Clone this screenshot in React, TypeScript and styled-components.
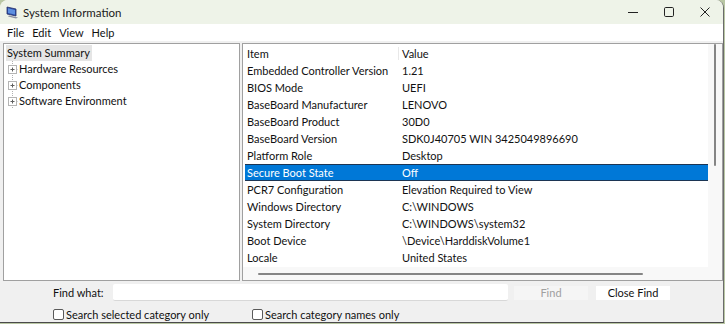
import * as React from "react"
import { styled, createGlobalStyle } from "styled-components"

const GlobalStyle = createGlobalStyle`
  html, body {
    margin: 0;
    padding: 0;
    background: #b9c7a4;
  }
  body {
    font-family: Lato, "Noto Sans", sans-serif;
    font-size: 11px;
    color: #111;
  }
`

const items: [string, string][] = [
  ["Embedded Controller Version", "1.21"],
  ["BIOS Mode", "UEFI"],
  ["BaseBoard Manufacturer", "LENOVO"],
  ["BaseBoard Product", "30D0"],
  ["BaseBoard Version", "SDK0J40705 WIN 3425049896690"],
  ["Platform Role", "Desktop"],
  ["Secure Boot State", "Off"],
  ["PCR7 Configuration", "Elevation Required to View"],
  ["Windows Directory", "C:\\WINDOWS"],
  ["System Directory", "C:\\WINDOWS\\system32"],
  ["Boot Device", "\\Device\\HarddiskVolume1"],
  ["Locale", "United States"],
]

const treeItems = ["Hardware Resources", "Components", "Software Environment"]

const AppIcon = () => (
  <svg width="13" height="13" viewBox="0 0 13 13">
    <path d="M1 1 L10 3 L10 10 L1 8 Z" fill="#2b4fa8" stroke="#27306b" strokeWidth="0.8" />
    <path d="M2 2.3 L9 4 L9 8.6 L2 7 Z" fill="#5d8fe0" />
    <path d="M3 9.5 L12 11.5 L10 12.5 L2 10.5 Z" fill="#8a8fa0" />
  </svg>
)

const Expander = () => (
  <svg width="11" height="16" viewBox="0 0 11 16">
    <line x1="5.5" y1="0" x2="5.5" y2="16" stroke="#b0b0b0" strokeDasharray="1 1" />
    <line x1="5.5" y1="8.5" x2="11" y2="8.5" stroke="#b0b0b0" strokeDasharray="1 1" />
    <rect x="1.5" y="4.5" width="8" height="8" fill="#fff" stroke="#b4b4b4" />
    <line x1="3.5" y1="8.5" x2="7.5" y2="8.5" stroke="#606060" />
    <line x1="5.5" y1="6.5" x2="5.5" y2="10.5" stroke="#606060" />
  </svg>
)

export default function App() {
  return (
    <>
      <GlobalStyle />
      <Window>
        <TitleBar>
          <TitleLeft>
            <AppIcon />
            <TitleText>System Information</TitleText>
          </TitleLeft>
          <Controls>
            <CtrlButton aria-label="Minimize">
              <svg width="12" height="12" viewBox="0 0 12 12">
                <line x1="1" y1="6.5" x2="11" y2="6.5" stroke="#222" />
              </svg>
            </CtrlButton>
            <CtrlButton aria-label="Maximize">
              <svg width="12" height="12" viewBox="0 0 12 12">
                <rect x="1.5" y="1.5" width="9" height="9" rx="1.2" fill="none" stroke="#222" />
              </svg>
            </CtrlButton>
            <CtrlButton aria-label="Close">
              <svg width="12" height="12" viewBox="0 0 12 12">
                <path d="M1.5 1.5 L10.5 10.5 M10.5 1.5 L1.5 10.5" stroke="#222" />
              </svg>
            </CtrlButton>
          </Controls>
        </TitleBar>

        <MenuBar>
          <MenuItem>File</MenuItem>
          <MenuItem>Edit</MenuItem>
          <MenuItem>View</MenuItem>
          <MenuItem>Help</MenuItem>
        </MenuBar>

        <Body>
          <Panes>
            <TreePane>
              <TreeRoot>System Summary</TreeRoot>
              {treeItems.map((t) => (
                <TreeRow key={t}>
                  <Expander />
                  <span>{t}</span>
                </TreeRow>
              ))}
            </TreePane>

            <ListPane>
              <ListArea>
                <ListRows>
                  <HeaderRow>
                    <ItemCell>Item</ItemCell>
                    <ValueCell $header>Value</ValueCell>
                  </HeaderRow>
                  {items.map(([k, v]) => (
                    <DataRow key={k} $selected={k === "Secure Boot State"}>
                      <ItemCell>{k}</ItemCell>
                      <ValueCell>{v}</ValueCell>
                    </DataRow>
                  ))}
                </ListRows>
                <VScroll>
                  <VThumb />
                </VScroll>
              </ListArea>
              <HScroll>
                <HThumb />
              </HScroll>
            </ListPane>
          </Panes>

          <FindRow>
            <FindLabel>Find what:</FindLabel>
            <FindInput />
            <PushButton disabled>Find</PushButton>
            <PushButton>Close Find</PushButton>
          </FindRow>

          <CheckRow>
            <CheckLabel $width={199}>
              <CheckBox />
              Search selected category only
            </CheckLabel>
            <CheckLabel>
              <CheckBox />
              Search category names only
            </CheckLabel>
          </CheckRow>
        </Body>
      </Window>
    </>
  )
}

const Window = styled.div`
  width: 723px;
  height: 322px;
  display: flex;
  flex-direction: column;
  background: #f0f0f0;
  border-right: 1px solid #6b6b6b;
  border-bottom: 1px solid #4a4a4a;
  border-radius: 8px 8px 0 0;
  overflow: hidden;
`

const TitleBar = styled.div`
  height: 24px;
  flex: none;
  display: flex;
  align-items: center;
  justify-content: space-between;
  background: #eef3e8;
`

const TitleLeft = styled.div`
  display: flex;
  align-items: center;
  gap: 4px;
  padding-left: 6px;
`

const TitleText = styled.span`
  font-size: 11.5px;
  color: #1a1a1a;
`

const Controls = styled.div`
  display: flex;
  height: 100%;
`

const CtrlButton = styled.div`
  width: 36px;
  height: 100%;
  display: flex;
  align-items: center;
  justify-content: center;
`

const MenuBar = styled.div`
  height: 16px;
  flex: none;
  display: flex;
  align-items: center;
  gap: 8px;
  background: #fff;
  padding: 0 0 1px 7px;
`

const MenuItem = styled.span`
  font-size: 11px;
`

const Body = styled.div`
  flex: 1;
  display: flex;
  flex-direction: column;
  background: #f0f0f0;
`

const Panes = styled.div`
  display: flex;
  gap: 2px;
  padding: 2px 0 0 3px;
  height: 238px;
`

const Pane = styled.div`
  background: #fff;
  border: 1px solid #a0a0a0;
  box-sizing: border-box;
  height: 100%;
`

const TreePane = styled(Pane)`
  width: 237px;
  padding: 1px 2px;
`

const TreeRoot = styled.div`
  display: inline-block;
  height: 16px;
  line-height: 16px;
  padding: 0 2px 0 1px;
  background: #e5e5e5;
`

const TreeRow = styled.div`
  height: 16px;
  display: flex;
  align-items: center;
  gap: 1px;
  line-height: 16px;
  padding-left: 1px;
`

const ListPane = styled(Pane)`
  flex: 1;
  display: flex;
  flex-direction: column;
`

const ListArea = styled.div`
  flex: 1;
  display: flex;
  min-height: 0;
`

const ListRows = styled.div`
  flex: 1;
  padding: 1px 0 0 2px;
`

const HeaderRow = styled.div`
  height: 17px;
  display: flex;
  align-items: center;
`

const DataRow = styled.div<{ $selected?: boolean }>`
  height: 17px;
  display: flex;
  align-items: center;
  box-sizing: border-box;
  background: ${(p) => (p.$selected ? "#0078d7" : "transparent")};
  color: ${(p) => (p.$selected ? "#fff" : "#111")};
  border-top: 1px solid ${(p) => (p.$selected ? "#1c3553" : "transparent")};
  border-bottom: 1px solid ${(p) => (p.$selected ? "#1c3553" : "transparent")};
`

const ItemCell = styled.span`
  width: 151px;
  padding-left: 2px;
  white-space: nowrap;
  overflow: hidden;
`

const ValueCell = styled.span<{ $header?: boolean }>`
  padding-left: 3px;
  white-space: nowrap;
  border-left: 1px solid ${(p) => (p.$header ? "#e8e8e8" : "transparent")};
`

const VScroll = styled.div`
  width: 14px;
  flex: none;
  background: #f8f8f8;
  display: flex;
  justify-content: center;
`

const VThumb = styled.div`
  width: 2px;
  height: 122px;
  background: #858585;
  border-radius: 1px;
`

const HScroll = styled.div`
  height: 13px;
  flex: none;
  background: #f8f8f8;
  display: flex;
  align-items: center;
  padding-left: 15px;
`

const HThumb = styled.div`
  height: 2px;
  width: 385px;
  background: #858585;
  border-radius: 1px;
`

const FindRow = styled.div`
  display: flex;
  align-items: center;
  height: 17px;
  margin-top: 3px;
  padding-left: 53px;
`

const FindLabel = styled.span`
  width: 60px;
`

const FindInput = styled.div`
  width: 395px;
  height: 16px;
  background: #fff;
  border-bottom: 1px solid #d8d8d8;
  border-radius: 2px;
  margin-right: 6px;
`

const PushButton = styled.button`
  width: 74px;
  height: 14px;
  margin-right: 8px;
  padding: 0;
  border: none;
  font: inherit;
  line-height: 14px;
  background: ${(p) => (p.disabled ? "#f5f5f5" : "#fff")};
  color: ${(p) => (p.disabled ? "#a0a0a0" : "#111")};
`

const CheckRow = styled.div`
  display: flex;
  align-items: center;
  height: 16px;
  margin-top: 5px;
  padding-left: 53px;
`

const CheckLabel = styled.label<{ $width?: number }>`
  display: flex;
  align-items: center;
  gap: 2px;
  width: ${(p) => (p.$width ? `${p.$width}px` : "auto")};
`

const CheckBox = styled.span`
  width: 9px;
  height: 9px;
  border: 1px solid #5a5a5a;
  border-radius: 2px;
  background: #fff;
`
